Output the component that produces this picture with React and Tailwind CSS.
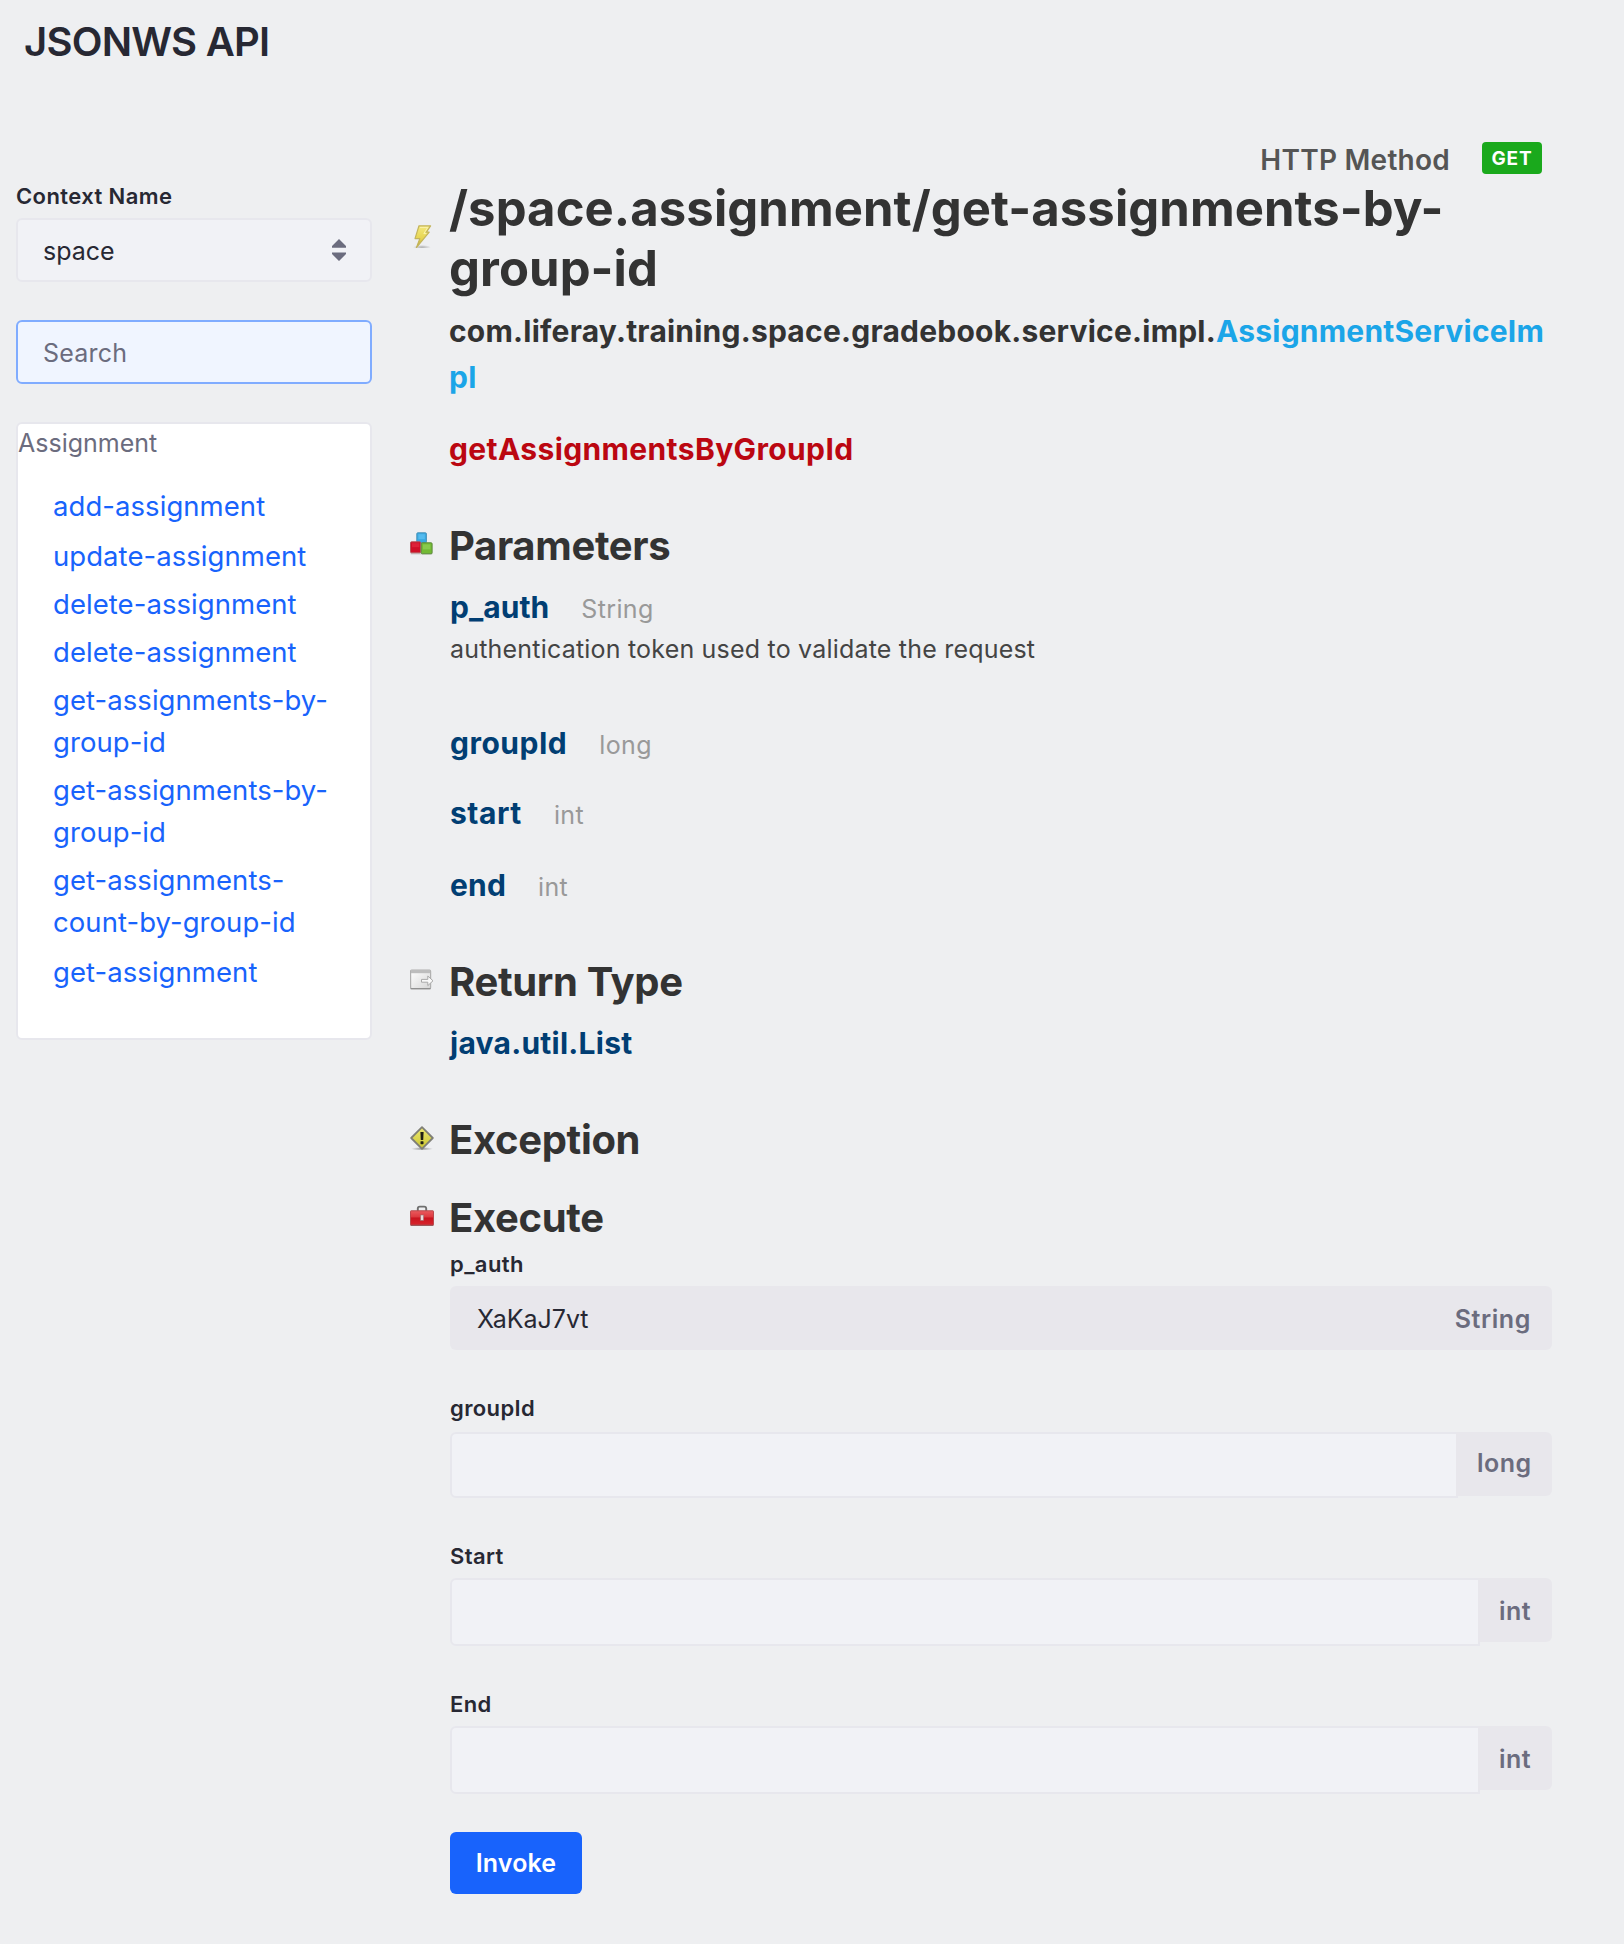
import React from "react";

const methods = [
  { lines: ["add-assignment"], gap: "mt-0" },
  { lines: ["update-assignment"], gap: "mt-2" },
  { lines: ["delete-assignment"], gap: "mt-1.5" },
  { lines: ["delete-assignment"], gap: "mt-1.5" },
  { lines: ["get-assignments-by-", "group-id"], gap: "mt-1.5" },
  { lines: ["get-assignments-by-", "group-id"], gap: "mt-1.5" },
  { lines: ["get-assignments-", "count-by-group-id"], gap: "mt-1.5" },
  { lines: ["get-assignment"], gap: "mt-2" },
];

function BoltIcon() {
  return (
    <svg className="size-6" viewBox="0 0 24 24">
      <defs>
        <linearGradient id="bolt" x1="0" y1="0" x2="0" y2="1">
          <stop offset="0" stopColor="#f4e97c" />
          <stop offset="0.6" stopColor="#e6d450" />
          <stop offset="1" stopColor="#b9a238" />
        </linearGradient>
        <radialGradient id="boltShadow">
          <stop offset="0" stopColor="#6f6f6f" stopOpacity="0.5" />
          <stop offset="1" stopColor="#6f6f6f" stopOpacity="0" />
        </radialGradient>
      </defs>
      <ellipse cx="12" cy="23.2" rx="9" ry="2.2" fill="url(#boltShadow)" />
      <path d="M9 1.8H20.6L16.4 8.2H19.2L6.4 23.6L9.8 14.6H5Z" fill="url(#bolt)" stroke="#c3b45c" strokeWidth="1.2" strokeLinejoin="round" />
      <path d="M10 3.4H17.8L13.8 9.6H16.4" fill="none" stroke="#faf4b4" strokeWidth="0.9" />
    </svg>
  );
}

function BlocksIcon() {
  return (
    <svg className="size-6" viewBox="0 0 24 24">
      <rect x="0.5" y="20.4" width="22" height="2.2" rx="1" fill="#666" opacity="0.25" />
      <rect x="6.8" y="0.8" width="9.6" height="10" rx="1" fill="#38a9e2" stroke="#4a93b8" />
      <rect x="8.4" y="2.2" width="6.4" height="5" fill="#55bbee" />
      <rect x="0.5" y="9.8" width="10.2" height="11" rx="1" fill="#cf1026" stroke="#b5545a" />
      <rect x="2" y="11.2" width="7.4" height="4" fill="#dd2238" />
      <rect x="11.3" y="10.8" width="10.8" height="11" rx="1" fill="#72ba34" stroke="#5c8a3a" />
      <rect x="13" y="12.4" width="7.4" height="5" fill="#88ca4c" />
    </svg>
  );
}

function ReturnIcon() {
  return (
    <svg className="size-6" viewBox="0 0 24 24">
      <defs>
        <linearGradient id="sheet" x1="0" y1="0" x2="1" y2="1">
          <stop offset="0" stopColor="#ffffff" />
          <stop offset="1" stopColor="#d6d6d6" />
        </linearGradient>
      </defs>
      <rect x="0.6" y="2.2" width="20" height="18.4" rx="1" fill="url(#sheet)" stroke="#b0b0b0" strokeWidth="1.2" />
      <rect x="1" y="2" width="19.2" height="3.2" fill="#bdbdbd" />
      <path d="M0.6 20.7H20.6" stroke="#8d8d8d" strokeWidth="1.2" />
      <path d="M11.5 11.4H17.8V8L23 12.8L17.8 17.6V14.2H11.5Z" fill="#fafafa" stroke="#a9a9a9" strokeWidth="1" strokeLinejoin="round" />
    </svg>
  );
}

function WarningIcon() {
  return (
    <svg className="size-6" viewBox="0 0 24 24">
      <defs>
        <linearGradient id="sign" x1="0" y1="0" x2="0" y2="1">
          <stop offset="0" stopColor="#ece873" />
          <stop offset="1" stopColor="#cbc52f" />
        </linearGradient>
        <radialGradient id="signShadow">
          <stop offset="0" stopColor="#555" stopOpacity="0.6" />
          <stop offset="1" stopColor="#555" stopOpacity="0" />
        </radialGradient>
      </defs>
      <ellipse cx="12" cy="22.8" rx="11" ry="1.8" fill="url(#signShadow)" />
      <path d="M12 1.2L22.8 12L12 22.8L1.2 12Z" fill="url(#sign)" stroke="#7f7f76" strokeWidth="1.8" strokeLinejoin="round" />
      <path d="M10.4 6H13.6L13.2 14H10.8Z" fill="#1f1f14" />
      <rect x="10.5" y="15.2" width="3" height="3" rx="0.6" fill="#1f1f14" />
    </svg>
  );
}

function ToolboxIcon() {
  return (
    <svg className="size-6" viewBox="0 0 24 24">
      <defs>
        <linearGradient id="case" x1="0" y1="0" x2="0" y2="1">
          <stop offset="0" stopColor="#ea5a5e" />
          <stop offset="0.42" stopColor="#dd3a40" />
          <stop offset="0.5" stopColor="#c9141f" />
          <stop offset="1" stopColor="#d8242c" />
        </linearGradient>
      </defs>
      <path d="M7.8 7.4V4.6Q7.8 2.6 9.8 2.6H14.2Q16.2 2.6 16.2 4.6V7.4" fill="none" stroke="#6f6f6f" strokeWidth="1.9" />
      <rect x="0.5" y="6.8" width="23" height="14.4" rx="0.6" fill="url(#case)" stroke="#b84a4e" />
      <path d="M0.6 21.3H23.4" stroke="#8d5052" strokeWidth="0.9" />
      <rect x="10.6" y="11" width="3" height="5.4" fill="#e9dede" stroke="#9b6b6d" strokeWidth="0.6" />
    </svg>
  );
}

function SectionHeading({ icon, title, className }) {
  return (
    <div className={"flex " + className}>
      <div className="mt-[11px] w-[39px] shrink-0">{icon}</div>
      <h2 className="text-[40px] font-bold leading-[49px] tracking-[-0.34px] text-[#333333]">{title}</h2>
    </div>
  );
}

function Param({ name, type, className, tracking }) {
  return (
    <div className={"ml-10 flex h-[46px] items-baseline leading-[46px] " + className}>
      <span className={"text-[30px] font-bold text-[#013e73] " + tracking}>{name}</span>
      <span className="ml-8 text-[25px] tracking-[0.35px] text-[#999999]">{type}</span>
    </div>
  );
}

function Label({ children, className }) {
  return (
    <label className={"block text-[22px] font-semibold leading-[26px] tracking-[0.4px] text-[#272833] " + className}>
      {children}
    </label>
  );
}

function Field({ label, type, labelGap, fieldGap, height, addonWidth, addonLine }) {
  return (
    <>
      <Label className={labelGap}>{label}</Label>
      <div className={"flex items-start " + fieldGap}>
        <div className={"flex-1 rounded-l-md border-2 border-[#e7e7ed] bg-[#f1f2f6] " + height} />
        <div className={"-ml-0.5 h-16 rounded-r-md bg-[#e8e7ec] pl-[21px] text-[25px] font-semibold tracking-[0.5px] text-[#6b6c7e] " + addonWidth + " " + addonLine}>
          {type}
        </div>
      </div>
    </>
  );
}

export default function App() {
  return (
    <div className="min-h-[1944px] w-[1624px] bg-[#eeeff1] font-['Inter',sans-serif] whitespace-nowrap text-[#272833]">
      <header className="px-6 pt-[17px]">
        <h1 className="text-[40px] font-semibold leading-[49px] tracking-[-0.77px]">JSONWS API</h1>
      </header>

      <div className="flex pl-4">
        <aside className="w-[356px] pt-[117px]">
          <Label className="">Context Name</Label>
          <div className="mt-[9px] flex h-16 items-center justify-between rounded-md border-2 border-[#e7e7ed] bg-[#f1f2f6] pr-6 pl-[25px] text-[25px]">
            <span className="pt-[3px]">space</span>
            <svg className="h-[22px] w-[14px]" viewBox="0 0 14 22">
              <path d="M7 0L14 7V8.8H0V7ZM7 22L14 15V13.5H0V15Z" fill="#6b6c7e" />
            </svg>
          </div>
          <div className="mt-[38px] flex h-16 items-center rounded-md border-2 border-[#80acff] bg-[#f0f5ff] pt-[3px] pl-[25px] text-[25px] tracking-[0.2px] text-[#6b6c7e]">
            Search
          </div>
          <nav className="mt-[38px] h-[618px] rounded-md border-2 border-[#e7e7ed] bg-white pt-1">
            <div className="text-[25px] leading-[30px] text-[#6b6c7e]">Assignment</div>
            <ul className="mt-[27px] pl-[35px]">
              {methods.map((m, i) => (
                <li key={i} className={"text-[27.5px] leading-[42px] tracking-[0.06px] text-[#1863fc] " + m.gap}>
                  {m.lines.map((line) => (
                    <div key={line}>{line}</div>
                  ))}
                </li>
              ))}
            </ul>
          </nav>
        </aside>

        <main className="ml-[38px] w-[1142px] pt-[76px]">
          <div className="flex h-[37px] items-start justify-end pr-[10px]">
            <span className="mt-px text-[28px] font-semibold leading-[34px] tracking-[0.25px] text-[#555555]">HTTP Method</span>
            <span className="ml-8 flex h-8 w-[60px] items-center justify-center rounded bg-[#1aa91c] pt-[3px] text-[19px] font-bold tracking-[0.85px] text-white">GET</span>
          </div>

          <div className="flex">
            <div className="mt-[45px] w-[39px] shrink-0">
              <BoltIcon />
            </div>
            <h2 className="text-[49px] font-bold leading-[60px] tracking-[0.09px] text-[#333333]">
              /space.assignment/get-assignments-by-
              <br />
              group-id
            </h2>
          </div>

          <div className="mt-[9px] ml-[39px] text-[30px] font-bold leading-[46px] tracking-[0.22px] text-[#333333]">
            com.liferay.training.space.gradebook.service.impl.
            <span className="text-[#1ba5e8]">
              AssignmentServiceIm
              <br />
              pl
            </span>
          </div>
          <div className="mt-[26px] ml-[39px] text-[30px] font-bold leading-[46px] tracking-[0.37px] text-[#bb0711]">
            getAssignmentsByGroupId
          </div>

          <SectionHeading className="mt-[49px]" icon={<BlocksIcon />} title="Parameters" />
          <Param className="mt-[14px]" name="p_auth" type="String" tracking="tracking-[0.05px]" />
          <p className="mt-1 ml-10 text-[25px] leading-[30px] tracking-[0.2px] text-[#444444]">
            authentication token used to validate the request
          </p>
          <Param className="mt-14" name="groupId" type="long" tracking="tracking-[0.5px]" />
          <Param className="mt-6" name="start" type="int" tracking="tracking-[0.55px]" />
          <Param className="mt-[26px]" name="end" type="int" tracking="tracking-[0.2px]" />

          <SectionHeading className="mt-[49px]" icon={<ReturnIcon />} title="Return Type" />
          <div className="mt-[14px] ml-10 text-[30px] font-bold leading-[46px] tracking-[0.25px] text-[#013e73]">java.util.List</div>

          <SectionHeading className="mt-[49px]" icon={<WarningIcon />} title="Exception" />
          <SectionHeading className="mt-[29px]" icon={<ToolboxIcon />} title="Execute" />

          <form className="ml-10">
            <Label className="mt-[9px]">p_auth</Label>
            <div className="mt-[9px] flex h-16 items-center justify-between rounded-md bg-[#e8e7ec] pt-[3px] pr-[21px] pl-[27px] text-[25px]">
              <span>XaKaJ7vt</span>
              <span className="font-semibold tracking-[0.6px] text-[#6b6c7e]">String</span>
            </div>

            <Field label="groupId" type="long" labelGap="mt-[45px]" fieldGap="mt-[11px]" height="h-[66px]" addonWidth="w-[96px]" addonLine="leading-[62px]" />
            <Field label="Start" type="int" labelGap="mt-[45px]" fieldGap="mt-[9px]" height="h-[68px]" addonWidth="w-[74px]" addonLine="leading-[66px]" />
            <Field label="End" type="int" labelGap="mt-[45px]" fieldGap="mt-[9px]" height="h-[68px]" addonWidth="w-[74px]" addonLine="leading-[66px]" />

            <button type="button" className="mt-[38px] block h-[62px] w-[132px] rounded-md bg-[#1863fc] pt-px text-[25px] font-semibold tracking-[0.1px] text-white">
              Invoke
            </button>
          </form>
        </main>
      </div>
    </div>
  );
}
